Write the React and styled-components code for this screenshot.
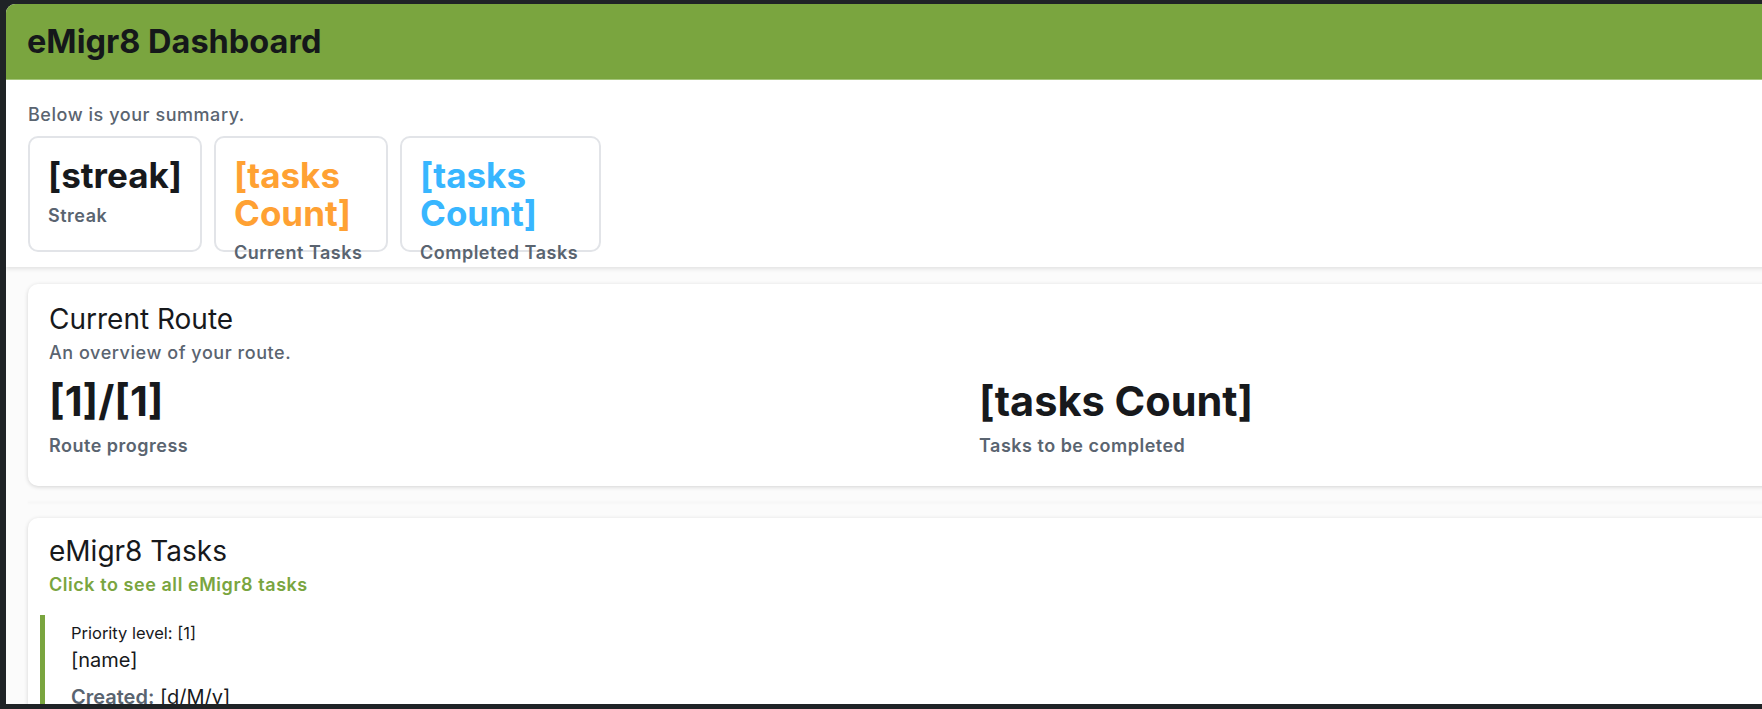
import styled, { createGlobalStyle } from 'styled-components'

const GlobalStyle = createGlobalStyle`
  html, body {
    margin: 0;
    padding: 0;
    background: #1f2326;
    overflow: hidden;
  }
  body {
    font-family: Inter, "Noto Sans", sans-serif;
    color: #17191c;
  }
`

const summary = [
  { id: 'streak', value: '[streak]', label: 'Streak', color: '#17191c', width: 174 },
  { id: 'current', value: '[tasks Count]', label: 'Current Tasks', color: '#ffa133', width: 174 },
  { id: 'completed', value: '[tasks Count]', label: 'Completed Tasks', color: '#38b6ff', width: 201 }
]

const routeStats = [
  { id: 'progress', value: '[1]/[1]', label: 'Route progress' },
  { id: 'tasks', value: '[tasks Count]', label: 'Tasks to be completed' }
]

const tasks = [{ id: 1, priority: '[1]', name: '[name]', created: '[d/M/y]' }]

export default function App() {
  return (
    <>
      <GlobalStyle />
      <Frame>
        <Window>
          <Header>
            <h1>eMigr8 Dashboard</h1>
          </Header>

          <SummarySection>
            <Muted>Below is your summary.</Muted>
            <SummaryRow>
              {summary.map((item) => (
                <SummaryCard key={item.id} $width={item.width}>
                  <SummaryValue $color={item.color}>{item.value}</SummaryValue>
                  <StatLabel>{item.label}</StatLabel>
                </SummaryCard>
              ))}
            </SummaryRow>
          </SummarySection>

          <Content>
            <Card>
              <CardTitle>Current Route</CardTitle>
              <Muted>An overview of your route.</Muted>
              <RouteGrid>
                {routeStats.map((stat) => (
                  <div key={stat.id}>
                    <RouteValue>{stat.value}</RouteValue>
                    <StatLabel>{stat.label}</StatLabel>
                  </div>
                ))}
              </RouteGrid>
            </Card>

            <Separator />

            <Card $tight>
              <CardTitle>eMigr8 Tasks</CardTitle>
              <TaskLink href="#">Click to see all eMigr8 tasks</TaskLink>
              {tasks.map((task) => (
                <TaskItem key={task.id}>
                  <Priority>Priority level: {task.priority}</Priority>
                  <TaskName>{task.name}</TaskName>
                  <Created>
                    <span>Created:</span> {task.created}
                  </Created>
                </TaskItem>
              ))}
            </Card>
          </Content>
        </Window>
      </Frame>
    </>
  )
}

const Frame = styled.div`
  height: 100vh;
  padding: 4px 0 0 6px;
  box-sizing: border-box;
  overflow: hidden;
`

const Window = styled.div`
  width: 1960px;
  height: 700px;
  background: #fbfbfb;
  border-top-left-radius: 9px;
  overflow: hidden;
`

const Header = styled.header`
  height: 75px;
  background: #7aa53f;
  border-bottom: 1px solid #a6c87c;
  display: flex;
  align-items: center;
  padding-left: 21px;

  h1 {
    margin: 0;
    font-size: 32.5px;
    font-weight: 700;
    color: #15181a;
  }
`

const SummarySection = styled.section`
  background: #fff;
  height: 187px;
  padding: 24px 21px 0 22px;
  box-sizing: border-box;
  box-shadow: 0 2px 4px rgba(0, 0, 0, 0.1);
  position: relative;
`

const Muted = styled.p`
  margin: 0;
  font-size: 18px;
  font-weight: 500;
  letter-spacing: 0.55px;
  line-height: 21px;
  color: #5a6470;
`

const SummaryRow = styled.div`
  display: flex;
  gap: 12px;
  margin-top: 11px;
`

const SummaryCard = styled.div`
  width: ${(p) => p.$width}px;
  height: 116px;
  box-sizing: border-box;
  border: 2px solid #e2e4e8;
  border-radius: 10px;
  padding: 19px 18px 0;
`

const SummaryValue = styled.div`
  font-size: 35px;
  font-weight: 700;
  line-height: 37.5px;
  color: ${(p) => p.$color};
`

const StatLabel = styled.div`
  margin-top: 10px;
  font-size: 18px;
  font-weight: 600;
  letter-spacing: 0.5px;
  line-height: 21px;
  color: #5a6470;
  white-space: nowrap;
`

const Content = styled.main`
  padding: 17px 0 0 22px;
`

const Card = styled.div`
  background: #fff;
  border-radius: 10px;
  box-shadow: 0 1px 4px rgba(0, 0, 0, 0.16);
  padding: ${(p) => (p.$tight ? '16px 20px 20px 12px' : '18px 20px 30px 21px')};

  & > h2,
  & > p,
  & > a {
    margin-left: ${(p) => (p.$tight ? '9px' : '0')};
  }
`

const CardTitle = styled.h2`
  margin: 0 0 6px;
  font-size: 28px;
  font-weight: 400;
  line-height: 34px;
`

const RouteGrid = styled.div`
  display: grid;
  grid-template-columns: 930px 1fr;
  margin-top: 14px;
`

const RouteValue = styled.div`
  font-size: 41.5px;
  font-weight: 700;
  line-height: 48px;
`

const Separator = styled.div`
  height: 1px;
  margin: 16px 0 15px;
  background: #f7f7f7;
  box-shadow: 0 0 3px rgba(0, 0, 0, 0.06);
`

const TaskLink = styled.a`
  display: block;
  font-size: 18px;
  font-weight: 600;
  letter-spacing: 0.55px;
  line-height: 21px;
  color: #7aa53f;
  text-decoration: none;
`

const TaskItem = styled.div`
  margin-top: 20px;
  border-left: 5px solid #7aa53f;
  padding: 8px 0 8px 26px;
`

const Priority = styled.div`
  font-size: 16.5px;
  line-height: 20px;
`

const TaskName = styled.div`
  margin-top: 5px;
  font-size: 20px;
  line-height: 24px;
`

const Created = styled.div`
  margin-top: 13px;
  font-size: 20px;
  line-height: 24px;

  span {
    color: #5a6470;
    font-weight: 600;
  }
`
